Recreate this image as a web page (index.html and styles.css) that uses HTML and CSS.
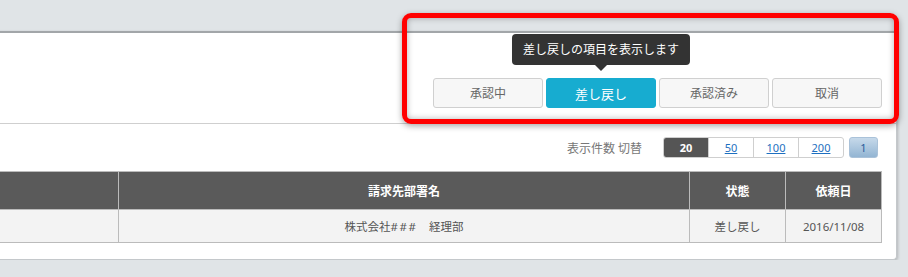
FILE: index.html
```html
<!DOCTYPE html>
<html lang="ja">
<head>
    <meta charset="UTF-8">
    <title>請求一覧</title>
    <link rel="stylesheet" href="styles.css">
</head>
<body>
    <div class="panel">
        <div class="filter">
            <div class="status-tabs">
                <button class="tab">承認中</button>
                <button class="tab active">差し戻し<span class="tooltip">差し戻しの項目を表示します</span></button>
                <button class="tab">承認済み</button>
                <button class="tab">取消</button>
            </div>
        </div>

        <div class="pager-row">
            <span class="pager-label">表示件数 切替</span>
            <div class="per-page">
                <span class="current">20</span>
                <a href="#">50</a>
                <a href="#">100</a>
                <a href="#">200</a>
            </div>
            <span class="page-num">1</span>
        </div>

        <table class="list">
            <thead>
                <tr>
                    <th></th>
                    <th class="col-dept">請求先部署名</th>
                    <th class="col-status">状態</th>
                    <th class="col-date">依頼日</th>
                </tr>
            </thead>
            <tbody>
                <tr>
                    <td></td>
                    <td>株式会社<span class="hash">###</span>　経理部</td>
                    <td>差し戻し</td>
                    <td>2016/11/08</td>
                </tr>
            </tbody>
        </table>
    </div>

    <div class="highlight"></div>
</body>
</html>
```

FILE: styles.css
```css
* {
    box-sizing: border-box;
}
body {
    margin: 0;
    background-color: #e0e4e7;
    font-family: "Noto Sans", "Noto Sans CJK JP", sans-serif;
    font-size: 12px;
    color: #555;
}
.panel {
    margin: 31px 11px 0 -20px;
    padding: 0 14px 16px 0;
    background-color: #fff;
    border-top: 2px solid #a2a6a9;
    border-right: 1px solid #c4c8cb;
    border-bottom: 1px solid #c4c8cb;
    border-radius: 0 0 4px 0;
    box-shadow: 1px 1px 3px rgba(0, 0, 0, 0.2);
}
.filter {
    margin-right: -14px;
    padding: 45px 14px 15px 0;
    border-bottom: 1px solid #cfcfcf;
}
.status-tabs {
    display: flex;
    justify-content: flex-end;
    gap: 3px;
}
.tab {
    position: relative;
    width: 110px;
    height: 30px;
    padding: 0;
    border: 1px solid #d0d0d0;
    border-radius: 3px;
    background-color: #f7f7f7;
    font-family: inherit;
    font-size: 12px;
    color: #666;
    cursor: pointer;
}
.tab.active {
    background-color: #17acd0;
    border-color: #17acd0;
    color: #fff;
    font-size: 13px;
}
.tooltip {
    position: absolute;
    left: 50%;
    bottom: 100%;
    margin-bottom: 14px;
    transform: translateX(-50%);
    padding: 0 11px;
    height: 31px;
    line-height: 31px;
    white-space: nowrap;
    background-color: #333;
    color: #fff;
    font-size: 12px;
    border-radius: 4px;
}
.tooltip::after {
    content: "";
    position: absolute;
    left: 50%;
    top: 100%;
    margin-left: -6px;
    border: 6px solid transparent;
    border-top-color: #333;
    border-bottom: 0;
}
.pager-row {
    display: flex;
    justify-content: flex-end;
    align-items: center;
    margin: 13px 4px 0 0;
}
.pager-label {
    margin-right: 21px;
    color: #777;
}
.per-page {
    display: flex;
    height: 21px;
    border: 1px solid #cfcfcf;
    border-radius: 3px;
    overflow: hidden;
}
.per-page span,
.per-page a {
    width: 45px;
    line-height: 19px;
    text-align: center;
    font-size: 11px;
    border-left: 1px solid #cfcfcf;
}
.per-page a {
    color: #1d6fc0;
}
.per-page .current {
    border-left: 0;
    width: 44px;
    background-color: #555;
    color: #fff;
    font-weight: bold;
}
.page-num {
    width: 29px;
    height: 21px;
    margin-left: 5px;
    line-height: 19px;
    text-align: center;
    font-size: 11px;
    color: #2a5a9a;
    border: 1px solid #aac2d9;
    border-radius: 3px;
    background: linear-gradient(#c6d9ea, #93b5d3);
}
.list {
    width: 100%;
    margin-top: 13px;
    border-collapse: collapse;
    border: 1px solid #bbb;
}
.list th,
.list td {
    border: 1px solid #bbb;
    text-align: center;
    font-size: 11.5px;
}
.list th {
    height: 38px;
    background-color: #5a5a5a;
    color: #fff;
    font-weight: bold;
    font-size: 12px;
}
.list td {
    height: 33px;
    background-color: #f3f3f3;
}
.hash {
    letter-spacing: 1.5px;
}
.col-dept {
    width: 571px;
}
.col-status,
.col-date {
    width: 96px;
}
.highlight {
    position: absolute;
    left: 402px;
    top: 13px;
    width: 497px;
    height: 111px;
    border: 5px solid #f00;
    border-radius: 9px;
    box-shadow: 0 2px 6px rgba(0, 0, 0, 0.35), inset 0 0 6px rgba(0, 0, 0, 0.3);
}
```
